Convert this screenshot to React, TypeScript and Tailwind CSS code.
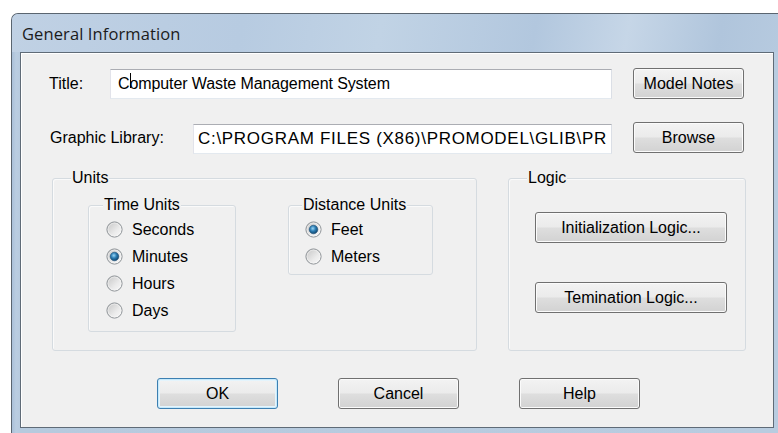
import React from "react";

function Radio({ checked }: { checked?: boolean }) {
  return (
    <svg width="17" height="17" viewBox="0 0 17 17" className="shrink-0">
      <defs>
        <linearGradient id="radioFace" x1="0" y1="0" x2="1" y2="1">
          <stop offset="0" stopColor="#c4c4c4" />
          <stop offset="0.6" stopColor="#ebebeb" />
          <stop offset="1" stopColor="#fbfbfb" />
        </linearGradient>
        <radialGradient id="radioDot" cx="0.42" cy="0.38" r="0.7">
          <stop offset="0" stopColor="#9ad6f6" />
          <stop offset="0.45" stopColor="#2c7db3" />
          <stop offset="1" stopColor="#0d3a5e" />
        </radialGradient>
      </defs>
      <circle cx="8.5" cy="8.5" r="7.6" fill="url(#radioFace)" stroke="#8f9498" strokeWidth="1" />
      <circle cx="8.5" cy="8.5" r="6.4" fill="none" stroke="#f6f6f6" strokeOpacity="0.6" strokeWidth="0.8" />
      {checked && <circle cx="8.5" cy="8.5" r="4.3" fill="url(#radioDot)" stroke="#1d4f77" strokeWidth="0.6" />}
    </svg>
  );
}

function Option({ label, checked }: { label: string; checked?: boolean }) {
  return (
    <div className="h-[27px] flex items-center gap-[9px]">
      <Radio checked={checked} />
      <span className="text-[16px] leading-none text-black">{label}</span>
    </div>
  );
}

function Btn({ children, className, primary }: { children: React.ReactNode; className: string; primary?: boolean }) {
  return (
    <div
      className={
        "h-[31px] shrink-0 rounded-[3px] border flex items-center justify-center text-[16px] text-black bg-[linear-gradient(#f3f3f3_0%,#ebebeb_48%,#dedede_52%,#d2d2d2_100%)] " +
        (primary
          ? "border-[#3c7fb1] shadow-[inset_0_0_0_1px_#c6e9fb,inset_0_0_0_2px_#e4f4fc] "
          : "border-[#707070] shadow-[inset_0_0_0_1px_#fbfbfb] ") +
        className
      }
    >
      {children}
    </div>
  );
}

function Group({ label, className, labelClass, children }: { label: string; className: string; labelClass: string; children?: React.ReactNode }) {
  return (
    <div className={"relative shrink-0 rounded-[3px] border border-[#d5dbe0] shadow-[inset_1px_1px_0_#fafafa] " + className}>
      <span className={"absolute top-[-10px] px-[1px] bg-[#f0f0f0] text-[16px] leading-[18px] text-black " + labelClass}>{label}</span>
      {children}
    </div>
  );
}

export default function App() {
  return (
    <div className="w-[778px] h-[433px] bg-white overflow-hidden font-['Liberation_Sans',Arial,sans-serif]">
      <div className="ml-[11px] mt-[13px] w-[768px] h-[420px] rounded-tl-[7px] border-l border-t border-[#5a6570] flex flex-col bg-[linear-gradient(90deg,#aac0d8_0px,#bacde1_4px,#b6cade_9px,#b8cce0_100%)]">
        {/* caption */}
        <div className="h-[38px] shrink-0 flex items-center pl-[10px] pt-[2px] rounded-tl-[6px] bg-[linear-gradient(100deg,#c0d1e4_0%,#b7cbe1_30%,#c1d3e5_48%,#b2c7de_68%,#c6d6e7_80%,#b0c5dc_92%,#b6cadf_100%)]">
          <span className="font-['Open_Sans',sans-serif] text-[16.5px] text-[#1b1b1b] tracking-[0.1px]">General Information</span>
        </div>

        {/* client area */}
        <div className="flex-1 flex pl-[8px] pr-[5px] pb-[5px] min-h-0">
          <div className="flex-1 border border-[#5f6b77] bg-[#f0f0f0] shadow-[inset_1px_1px_0_#ffffff] flex flex-col">
            {/* title row */}
            <div className="mt-[15px] ml-[28px] flex items-center h-[31px]">
              <span className="w-[61px] shrink-0 text-[16px] text-black">Title:</span>
              <div className="w-[502px] h-[30px] border border-[#abadb3] border-l-[#e2e3ea] border-r-[#dbdfe6] border-b-[#e3e9ef] bg-white flex items-center pl-[7px] text-[16px] text-black tracking-[-0.1px]">
                <span>C</span>
                <span className="relative">
                  <span className="absolute left-[1px] top-[1px] w-[1px] h-[15px] bg-black" />
                  omputer Waste Management System
                </span>
              </div>
              <Btn className="ml-[21px] w-[111px]">Model Notes</Btn>
            </div>

            {/* library row */}
            <div className="mt-[23px] ml-[29px] flex items-center h-[31px]">
              <span className="w-[143px] shrink-0 text-[16px] text-black">Graphic Library:</span>
              <div className="w-[419px] h-[30px] mt-[2px] border border-[#abadb3] border-l-[#e2e3ea] border-r-[#dbdfe6] border-b-[#e3e9ef] bg-white flex items-center pl-[4px] text-[17px] text-black overflow-hidden whitespace-nowrap tracking-[0.7px]">
                C:\PROGRAM FILES (X86)\PROMODEL\GLIB\PR
              </div>
              <Btn className="ml-[21px] w-[111px]">Browse</Btn>
            </div>

            {/* groups */}
            <div className="mt-[25px] ml-[31px] flex gap-[31px]">
              <Group label="Units" className="w-[425px] h-[173px]" labelClass="left-[18px]">
                <div className="flex items-start pt-[26px] pl-[35px] gap-[52px]">
                  <Group label="Time Units" className="w-[148px] h-[127px]" labelClass="left-[14px]">
                    <div className="pt-[10px] pl-[17px] flex flex-col">
                      <Option label="Seconds" />
                      <Option label="Minutes" checked />
                      <Option label="Hours" />
                      <Option label="Days" />
                    </div>
                  </Group>
                  <Group label="Distance Units" className="w-[145px] h-[70px]" labelClass="left-[13px]">
                    <div className="pt-[10px] pl-[16px] flex flex-col">
                      <Option label="Feet" checked />
                      <Option label="Meters" />
                    </div>
                  </Group>
                </div>
              </Group>
              <Group label="Logic" className="w-[238px] h-[173px]" labelClass="left-[18px]">
                <div className="pt-[33px] pl-[26px] flex flex-col gap-[39px]">
                  <Btn className="w-[192px]">Initialization Logic...</Btn>
                  <Btn className="w-[192px]">Temination Logic...</Btn>
                </div>
              </Group>
            </div>

            {/* dialog buttons */}
            <div className="mt-[27px] ml-[136px] flex gap-[60px]">
              <Btn primary className="w-[121px]">OK</Btn>
              <Btn className="w-[121px]">Cancel</Btn>
              <Btn className="w-[121px]">Help</Btn>
            </div>
          </div>
        </div>
      </div>
    </div>
  );
}
